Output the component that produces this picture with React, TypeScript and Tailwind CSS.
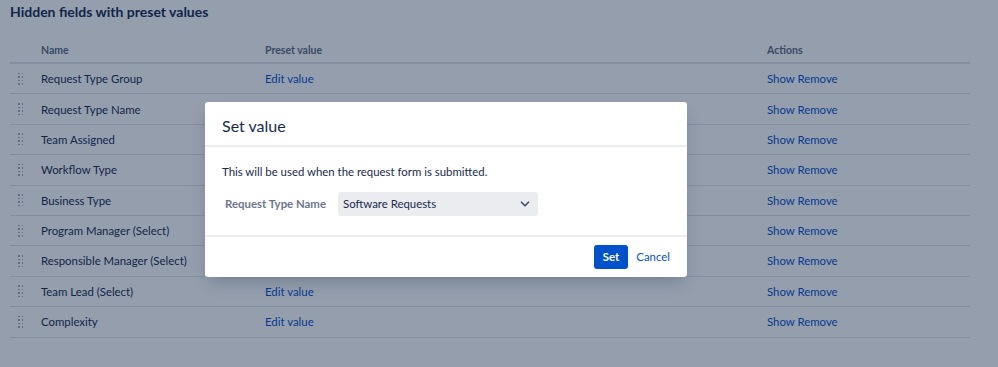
import { ChevronDown } from "lucide-react";

const rows = [
  "Request Type Group",
  "Request Type Name",
  "Team Assigned",
  "Workflow Type",
  "Business Type",
  "Program Manager (Select)",
  "Responsible Manager (Select)",
  "Team Lead (Select)",
  "Complexity",
];

const DragHandle = () => (
  <div className="grid grid-cols-2 gap-x-[2px] gap-y-[2px] w-[5px]">
    {Array.from({ length: 8 }).map((_, i) => (
      <span key={i} className="block w-[1.5px] h-[1.5px] bg-[#a5adba]" />
    ))}
  </div>
);

const App = () => {
  return (
    <div
      className="relative w-full h-[367px] overflow-hidden bg-white text-[#172b4d]"
      style={{ fontFamily: 'Lato, "Noto Sans", sans-serif' }}
    >
      {/* page behind the dialog */}
      <div className="pl-[10px] pr-[28px] pt-[3px]">
        <h2 className="text-[14px] font-bold leading-[18px] h-[18px]">Hidden fields with preset values</h2>

        <div className="mt-[18px] text-[11.4px]">
          <div className="grid grid-cols-[31px_224px_502px_1fr] items-center h-[25px] border-b-2 border-[#dfe1e6] text-[#5e6c84] text-[10.5px] font-bold">
            <span />
            <span>Name</span>
            <span>Preset value</span>
            <span>Actions</span>
          </div>
          {rows.map((name) => (
            <div
              key={name}
              className="grid grid-cols-[31px_224px_502px_1fr] items-center h-[30.4px] border-b border-[#dfe1e6]"
            >
              <div className="pl-[8px]">
                <DragHandle />
              </div>
              <span>{name}</span>
              <span>
                <a className="text-[#0052cc]">Edit value</a>
              </span>
              <span>
                <a className="text-[#0052cc]">Show</a>{" "}
                <a className="text-[#0052cc]">Remove</a>
              </span>
            </div>
          ))}
        </div>
      </div>

      {/* blanket */}
      <div className="absolute inset-0 bg-[#091e42]/[0.43]" />

      {/* dialog */}
      <div className="absolute left-[205px] top-[102px] w-[482px] bg-white rounded-[3px] shadow-[0_8px_16px_-4px_rgba(9,30,66,0.25)]">
        <div className="h-[45px] px-[17px] flex items-center border-b-2 border-[#ebecf0]">
          <span className="text-[16px] leading-none text-[#172b4d] pt-[5px]">Set value</span>
        </div>
        <div className="px-[17px] pt-[17px] pb-[19px] border-b-2 border-[#ebecf0]">
          <p className="text-[11.4px] leading-[16px]">This will be used when the request form is submitted.</p>
          <div className="flex items-center mt-[12px]">
            <label className="w-[104px] whitespace-nowrap text-right text-[11.4px] text-[#6b778c] font-bold">Request Type Name</label>
            <div className="ml-[12px] w-[200px] h-[24px] bg-[#ebecf0] rounded-[3px] flex items-center justify-between pl-[5px] pr-[6px] text-[11.4px]">
              <span>Software Requests</span>
              <ChevronDown className="w-[14px] h-[14px] text-[#42526e]" strokeWidth={3} />
            </div>
          </div>
        </div>
        <div className="h-[40px] flex items-center justify-end pr-[17px] gap-[8px]">
          <button className="h-[24px] px-[9px] bg-[#0052cc] text-white text-[11.4px] font-bold rounded-[3px]">Set</button>
          <button className="text-[11.4px] text-[#0052cc]">Cancel</button>
        </div>
      </div>
    </div>
  );
};

export default App;
